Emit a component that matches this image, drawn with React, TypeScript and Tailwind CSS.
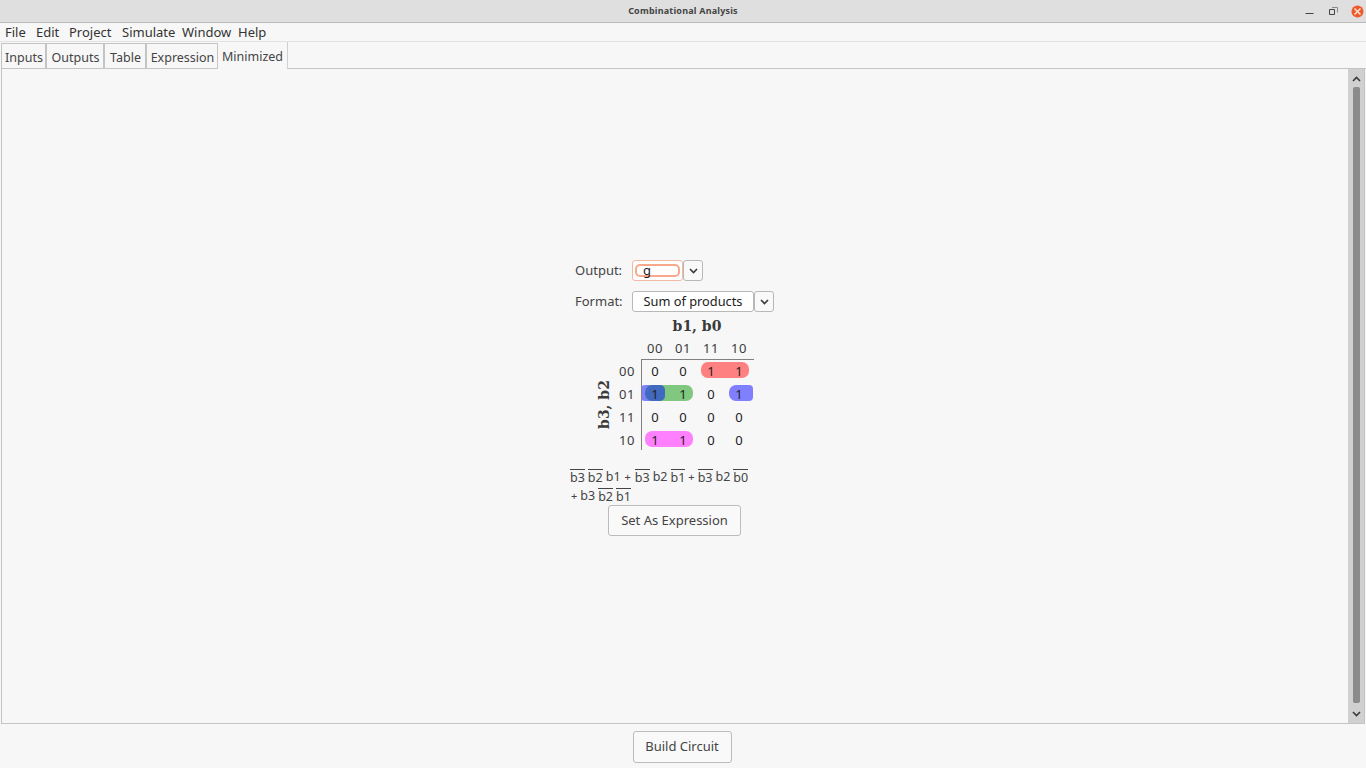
const font = { fontFamily: '"Noto Sans", "Open Sans", sans-serif' };

const menus = [
  { label: "File", width: "w-[31px]" },
  { label: "Edit", width: "w-[33px]" },
  { label: "Project", width: "w-[53px]" },
  { label: "Simulate", width: "w-[60px]" },
  { label: "Window", width: "w-[56px]" },
  { label: "Help", width: "w-[30px]" },
];

const tabs = [
  { label: "Inputs", width: "w-[45px]" },
  { label: "Outputs", width: "w-[58px]" },
  { label: "Table", width: "w-[42px]" },
  { label: "Expression", width: "w-[72px]" },
];

const columns = ["00", "01", "11", "10"];
const rows = [
  { label: "00", cells: ["0", "0", "1", "1"] },
  { label: "01", cells: ["1", "1", "0", "1"] },
  { label: "11", cells: ["0", "0", "0", "0"] },
  { label: "10", cells: ["1", "1", "0", "0"] },
];

function Chevron({ className }: { className?: string }) {
  return (
    <svg width="9" height="6" viewBox="0 0 9 6" className={className}>
      <path d="M1 1l3.5 3.5L8 1" fill="none" stroke="#3a3a3a" strokeWidth="1.6" />
    </svg>
  );
}

function DropButton() {
  return (
    <div className="flex h-[21px] w-[20px] items-center justify-center rounded-[3px] border border-[#b8b8b8] bg-[#f9f9f9]">
      <Chevron />
    </div>
  );
}

function Bar({ children }: { children: string }) {
  return <span className="border-t border-[#444] pt-px leading-[13px]">{children}</span>;
}

function KMap() {
  return (
    <div className="relative ml-[28px] mt-[1px] h-[118px] w-[175px] text-[13px] text-[#222]">
      <div className="absolute left-0 top-[22px] flex h-[91px] w-[14px] items-center justify-center">
        <span className="-rotate-90 whitespace-nowrap text-[14px] font-bold text-[#3a3a3a]" style={{ fontFamily: '"DejaVu Serif", serif' }}>
          b3, b2
        </span>
      </div>

      {/* highlights */}
      <div className="absolute left-[104px] top-[25px] h-[16px] w-[48px] rounded-[7px] bg-[#ff8080]" />
      <div className="absolute left-[44px] top-[48px] h-[16px] w-[24px] rounded-[7px] rounded-l-[4px] bg-[#8080ff]" />
      <div className="absolute left-[132px] top-[48px] h-[16px] w-[24px] rounded-[7px] rounded-r-[4px] bg-[#8080ff]" />
      <div className="absolute left-[48px] top-[48px] h-[16px] w-[48px] rounded-[7px] bg-[#80c880]" />
      <div className="absolute left-[48px] top-[48px] h-[16px] w-[20px] rounded-l-[7px] rounded-r-[5px] bg-[#4169bf]" />
      <div className="absolute left-[48px] top-[94px] h-[16px] w-[48px] rounded-[7px] bg-[#ff80ff]" />

      <div className="absolute left-[44px] top-[22px] h-[91px] w-[113px] border-l border-t border-[#808080]" />

      <div className="relative grid grid-cols-[28px_28px_28px_28px_28px] grid-rows-[repeat(5,23px)] pl-[16px]">
        <div />
        {columns.map((c) => (
          <div key={c} className="flex items-center justify-center tracking-[0.5px] text-[#3c3c3c]">
            {c}
          </div>
        ))}
        {rows.map((r) => (
          <div key={r.label} className="contents">
            <div className="flex items-center justify-center tracking-[0.5px] text-[#3c3c3c]">{r.label}</div>
            {r.cells.map((v, i) => (
              <div key={i} className="flex items-center justify-center">
                {v}
              </div>
            ))}
          </div>
        ))}
      </div>
    </div>
  );
}

export default function App() {
  return (
    <div className="flex h-[768px] w-[1366px] flex-col overflow-hidden bg-[#f7f7f7] text-[#444]" style={font}>
      {/* title bar */}
      <div className="relative flex h-[23px] items-center justify-center border-b border-[#bcbcbc] bg-[#dfdfdf]">
        <span className="text-[9px] font-bold tracking-[0.2px] text-[#444]">Combinational Analysis</span>
        <div className="absolute right-[2px] top-[4px] flex items-center">
          <svg width="9" height="14" viewBox="0 0 9 14" className="mr-[15px]">
            <path d="M0.5 9.5h8" stroke="#444" strokeWidth="1" />
          </svg>
          <svg width="9" height="14" viewBox="0 0 9 14" className="mr-[13px]">
            <path d="M0.5 5.5h5v5h-5z" fill="none" stroke="#444" />
            <path d="M3 3.5h5.5v5" fill="none" stroke="#888" />
          </svg>
          <svg width="13" height="13" viewBox="0 0 13 13">
            <circle cx="6.5" cy="6.5" r="6" fill="#ef5a2a" />
            <path d="M3.5 3.5l6 6M9.5 3.5l-6 6" stroke="#fbe3d8" strokeWidth="1.5" />
          </svg>
        </div>
      </div>

      {/* menu bar */}
      <div className="flex h-[19px] items-center border-b border-[#e2e2e2] pl-[5px] pt-[2px] text-[13px] text-[#333]">
        {menus.map((m) => (
          <span key={m.label} className={m.width}>
            {m.label}
          </span>
        ))}
      </div>

      {/* tabs */}
      <div className="flex h-[27px] items-end pl-[1px] text-[12.5px]">
        {tabs.map((t) => (
          <div key={t.label} className={`flex h-[26px] items-center justify-center border border-[#c4c4c4] ${t.width} pl-[1px] pt-[5px]`}>
            {t.label}
          </div>
        ))}
        <div className="flex h-[27px] w-[70px] items-center justify-center border-r border-[#d0d0d0] pt-[4px]">Minimized</div>
        <div className="h-px flex-1 bg-[#c4c4c4]" />
      </div>

      {/* main panel */}
      <div className="ml-[1px] mr-[1px] flex h-[655px] border-b border-l border-r border-[#c4c4c4]">
        <div className="flex-1 pl-[567px] pt-[191px]">
          <div className="flex h-[21px] items-center text-[13px]">
            <span className="w-[63px] pl-[6px]">Output:</span>
            <div className="flex h-[21px] w-[51px] items-center rounded-[3px] border border-[#f3b9a2] bg-white pl-[2px]">
              <div className="flex h-[13px] w-[45px] items-center rounded-[5px] border-2 border-[#f8a98c] pl-[6px] text-[#222]">g</div>
            </div>
            <DropButton />
          </div>
          <div className="mt-[10px] flex h-[21px] items-center text-[13px]">
            <span className="w-[63px] pl-[6px]">Format:</span>
            <div className="flex h-[21px] w-[122px] items-center justify-center rounded-[3px] border border-[#b8b8b8] bg-white text-[12.8px] text-[#222]">
              Sum of products
            </div>
            <DropButton />
          </div>
          <div className="mt-[4px] w-[256px] text-center text-[14px] font-bold leading-[20px] text-[#3a3a3a]" style={{ fontFamily: '"DejaVu Serif", serif' }}>
            b1, b0
          </div>
          <KMap />
          <div className="mt-[13px] flex h-[18px] items-end gap-[3px] pb-[2px] pl-[1px] text-[12.5px] leading-[14px]">
            <Bar>b3</Bar>
            <Bar>b2</Bar>
            <span>b1</span>
            <span className="px-[1px] text-[11px]">+</span>
            <Bar>b3</Bar>
            <span>b2</span>
            <Bar>b1</Bar>
            <span className="text-[11px]">+</span>
            <Bar>b3</Bar>
            <span>b2</span>
            <Bar>b0</Bar>
          </div>
          <div className="flex h-[18px] items-end gap-[3px] pb-[1px] pl-[2px] text-[12.5px] leading-[14px]">
            <span className="text-[11px]">+</span>
            <span>b3</span>
            <Bar>b2</Bar>
            <Bar>b1</Bar>
          </div>
          <button className="ml-[39px] mt-[1px] h-[31px] w-[133px] rounded-[3px] border border-[#bcbcbc] bg-[#f9f9f9] text-[13px]">
            Set As Expression
          </button>
        </div>

        {/* scrollbar */}
        <div className="relative flex w-[16px] flex-col items-center bg-[#d0d0d0]">
          <Chevron className="mt-[7px] rotate-180" />
          <div className="mt-[5px] h-[616px] w-[7px] rounded-[2px] bg-[#8b8b8b]" />
          <Chevron className="mt-[8px]" />
        </div>
      </div>

      {/* footer */}
      <div className="flex flex-1 justify-center pr-[2px] pt-[7px]">
        <button className="h-[32px] w-[99px] rounded-[3px] border border-[#bcbcbc] bg-[#f9f9f9] text-[13px]">Build Circuit</button>
      </div>
    </div>
  );
}
